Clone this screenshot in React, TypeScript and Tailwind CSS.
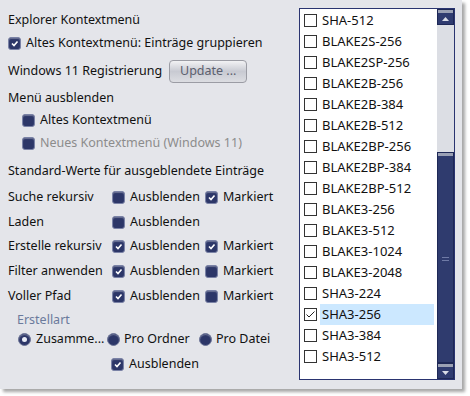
import React from 'react';

// Options panel: Explorer context menu settings + hash algorithm list

const font = { fontFamily: '"Noto Sans", "Open Sans", sans-serif' };

function Box({ checked }: { checked?: boolean }) {
  return (
    <span className="flex h-[13px] w-[13px] shrink-0 items-center justify-center rounded-[3px] border border-[#7a82a6] bg-[#2c3668] shadow-[inset_0_1px_1px_rgba(255,255,255,0.3)]">
      {checked && (
        <svg width="9" height="9" viewBox="0 0 9 9">
          <path d="M2 4.5 L4 6.5 L7.5 2.5" fill="none" stroke="#ffffff" strokeWidth="1.6" />
        </svg>
      )}
    </span>
  );
}

function Radio({ checked }: { checked?: boolean }) {
  return (
    <span className="flex h-[13px] w-[13px] shrink-0 items-center justify-center rounded-full border border-[#6e7698] bg-[#2c3668] shadow-[inset_0_1px_1px_rgba(255,255,255,0.3)]">
      {checked && <span className="h-[5px] w-[5px] rounded-full bg-[#e8ecf6]" />}
    </span>
  );
}

function Check({ label, checked, disabled }: { label: string; checked?: boolean; disabled?: boolean }) {
  return (
    <span className="flex items-center gap-[5px]">
      <Box checked={checked} />
      <span className={disabled ? 'text-[#8c8c8c]' : 'text-[#111111]'}>{label}</span>
    </span>
  );
}

function DefaultRow({ label, hide, mark, noMark, className }: { label: string; hide?: boolean; mark?: boolean; noMark?: boolean; className?: string }) {
  return (
    <div className={`flex h-5 items-center ${className ?? ''}`}>
      <span className="w-[112px] pl-[8px]">{label}</span>
      <span className="w-[93px]">
        <Check label="Ausblenden" checked={hide} />
      </span>
      {!noMark && <Check label="Markiert" checked={mark} />}
    </div>
  );
}

const hashes = [
  'SHA-512', 'BLAKE2S-256', 'BLAKE2SP-256', 'BLAKE2B-256', 'BLAKE2B-384', 'BLAKE2B-512',
  'BLAKE2BP-256', 'BLAKE2BP-384', 'BLAKE2BP-512', 'BLAKE3-256', 'BLAKE3-512', 'BLAKE3-1024',
  'BLAKE3-2048', 'SHA3-224', 'SHA3-256', 'SHA3-384', 'SHA3-512',
];

function ScrollButton({ up }: { up?: boolean }) {
  return (
    <div className="flex h-[16px] shrink-0 flex-col border border-[#1e2856] bg-[#2f3b70]">
      <div className="h-[3px] bg-[#9aa0b4]" />
      <div className="flex flex-1 items-center justify-center">
        <svg width="7" height="4" viewBox="0 0 7 4">
          <path d={up ? 'M0 4 L3.5 0 L7 4 Z' : 'M0 0 L3.5 4 L7 0 Z'} fill="#d8dbe6" />
        </svg>
      </div>
    </div>
  );
}

function HashList() {
  return (
    <div className="mr-[7px] mt-[8px] flex h-[372px] w-[156px] border border-[#2a3470] bg-white text-[13px]">
      <div className="flex-1 pt-[1px]">
        {hashes.map((h) => {
          const sel = h === 'SHA3-256';
          return (
            <div key={h} className="flex h-[21px] items-center pl-[4px]">
              <span className="flex h-[13px] w-[13px] shrink-0 items-center justify-center border border-[#333333] bg-white">
                {sel && (
                  <svg width="11" height="11" viewBox="0 0 11 11">
                    <path d="M1.5 5.5 L4 8 L9.5 2.5" fill="none" stroke="#222222" strokeWidth="1" />
                  </svg>
                )}
              </span>
              <span className={`ml-[3px] flex h-[21px] flex-1 items-center pl-[2px] ${sel ? 'bg-[#cce8ff]' : ''}`}>{h}</span>
            </div>
          );
        })}
      </div>
      <div className="ml-[3px] flex h-full w-[17px] shrink-0 flex-col bg-[#dcdee4]">
        <ScrollButton up />
        <div className="h-[127px] shrink-0" />
        <div className="flex h-[211px] shrink-0 flex-col border border-[#1e2856] bg-[#2f3b6e]">
          <div className="h-[3px] bg-[#9aa0b4]" />
          <div className="flex flex-1 flex-col items-center justify-center gap-[2px]">
            <div className="h-px w-[7px] bg-[#6f7aa6]" />
            <div className="h-px w-[7px] bg-[#6f7aa6]" />
          </div>
        </div>
        <ScrollButton />
      </div>
    </div>
  );
}

export default function App() {
  return (
    <div className="h-[396px] w-[470px] bg-white text-[12.5px] text-[#111111]" style={font}>
      <div className="flex h-[389px] w-[462px] bg-[#e4e5ea] shadow-[3px_3px_3px_rgba(0,0,0,0.35)]">
        <div className="flex-1">
          <div className="ml-[8px] mt-[10px] flex h-5 items-center">Explorer Kontextmenü</div>
          <div className="ml-[8px] mt-[3px] flex h-5 items-center">
            <Check label="Altes Kontextmenü: Einträge gruppieren" checked />
          </div>
          <div className="ml-[8px] mt-[6px] flex h-[24px] items-center">
            <span className="w-[161px]">Windows 11 Registrierung</span>
            <button className="h-[23px] w-[78px] rounded-[4px] border border-[#9b9ca4] bg-gradient-to-b from-[#f2f2f4] via-[#c8cad2] to-[#dcdde2] pl-[10px] text-left text-[#5c5f6e]">
              Update ...
            </button>
          </div>
          <div className="ml-[8px] mt-[5px] flex h-5 items-center">Menü ausblenden</div>
          <div className="ml-[22px] mt-[2px] flex h-5 items-center">
            <Check label="Altes Kontextmenü" />
          </div>
          <div className="ml-[22px] mt-[3px] flex h-5 items-center">
            <Check label="Neues Kontextmenü (Windows 11)" disabled />
          </div>
          <div className="ml-[8px] mt-[8px] flex h-5 items-center">Standard-Werte für ausgeblendete Einträge</div>
          <DefaultRow className="mt-[6px]" label="Suche rekursiv" mark />
          <DefaultRow className="mt-[5px]" label="Laden" noMark />
          <DefaultRow className="mt-[4px]" label="Erstelle rekursiv" hide mark />
          <DefaultRow className="mt-[5px]" label="Filter anwenden" hide />
          <DefaultRow className="mt-[5px]" label="Voller Pfad" hide />
          <div className="ml-[17px] mt-[6px] flex h-4 items-center text-[#6b7a9c]">Erstellart</div>
          <div className="ml-[18px] mt-[1px] flex h-5 items-center">
            <span className="flex w-[89px] items-center gap-[5px]"><Radio checked />Zusamme...</span>
            <span className="flex w-[92px] items-center gap-[4px]"><Radio />Pro Ordner</span>
            <span className="flex items-center gap-[4px]"><Radio />Pro Datei</span>
          </div>
          <div className="ml-[111px] mt-[5px] flex h-5 items-center">
            <Check label="Ausblenden" checked />
          </div>
        </div>
        <HashList />
      </div>
    </div>
  );
}
